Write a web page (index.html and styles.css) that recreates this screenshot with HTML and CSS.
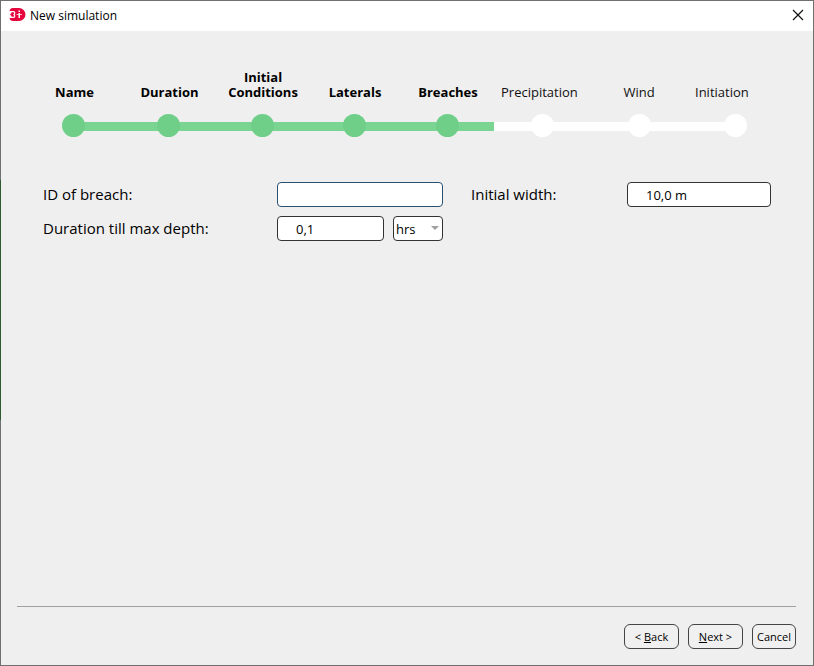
FILE: index.html
```html
<!DOCTYPE html>
<html lang="en">
<head>
<meta charset="utf-8">
<title>New simulation</title>
<link rel="stylesheet" href="styles.css">
</head>
<body>
<div class="window">
  <header class="titlebar">
    <svg class="logo" width="17" height="14" viewBox="0 0 17 14" aria-hidden="true">
      <path fill="#e5063e" d="M4 0h6a6.500 6.500 0 0 1 0 13H4Q1 13 .5 10L2.500 9V8L1 6.500 2.500 5V4L.5 3Q1 0 4 0z"/>
      <path fill="none" stroke="#fff" stroke-width="1.200" d="M1 3.600h3.500q1.300 0 1.300 1.300T4.500 6.500q1.300 .3 1.300 1.600t-1.300 1.300H1"/>
      <path fill="#fff" d="M9.500 5h1.500v5h-1.500zM9.500 2.500h1.500v1.500h-1.500z"/>
      <path fill="none" stroke="#fff" stroke-width="1" opacity=".7" d="M7.500 6.500h5.500"/>
    </svg>
    <h1 class="title">New simulation</h1>
    <button class="close" type="button" aria-label="Close">
      <svg width="12" height="12" viewBox="0 0 12 12"><path d="M1 1l10 10M11 1L1 11" stroke="#111" stroke-width="1.200" fill="none"/></svg>
    </button>
  </header>
  <form class="content">
    <ol class="steps">
      <li class="step done"><span class="name">Name</span><span class="track"></span></li>
      <li class="step done"><span class="name">Duration</span><span class="track"></span></li>
      <li class="step done"><span class="name">Initial<br>Conditions</span><span class="track"></span></li>
      <li class="step done"><span class="name">Laterals</span><span class="track"></span></li>
      <li class="step done" aria-current="step"><span class="name">Breaches</span><span class="track"></span></li>
      <li class="step long"><span class="name">Precipitation</span><span class="track"></span></li>
      <li class="step"><span class="name">Wind</span><span class="track"></span></li>
      <li class="step long"><span class="name">Initiation</span><span class="track"></span></li>
    </ol>
    <div class="fields">
      <label for="breach-id">ID of breach:</label>
      <input class="field focus" id="breach-id" type="text">
      <label class="second" for="width">Initial width:</label>
      <input class="field number" id="width" type="text" value="10,0 m">
      <label for="duration">Duration till max depth:</label>
      <div class="pair">
        <input class="field number" id="duration" type="text" value="0,1">
        <div class="unit">
          <select class="field" aria-label="Duration unit"><option>hrs</option></select>
        </div>
      </div>
    </div>
    <footer class="actions">
      <button class="btn" type="button"><span>&lt; <u>B</u>ack</span></button>
      <button class="btn" type="button"><span><u>N</u>ext &gt;</span></button>
      <button class="btn cancel" type="button">Cancel</button>
    </footer>
  </form>
</div>
</body>
</html>
```
FILE: styles.css
```css
* { box-sizing: border-box; }

body {
  margin: 0;
  font-family: "Open Sans", "Noto Sans", sans-serif;
  color: #000;
}

.window {
  display: flex;
  flex-direction: column;
  min-height: 100vh;
  padding: 1px;
  background: linear-gradient(#707070 27%, #2f5b2e 27%, #2f5b2e 63%, #707070 63%) left / 1px 100% no-repeat #707070;
}

.titlebar {
  display: flex;
  align-items: center;
  gap: 4px;
  height: 30px;
  padding: 0 9px 2px 8px;
  background: #fff;
}

.title {
  flex: 1;
  margin: 0;
  font-size: 12px;
  font-weight: 400;
}

.close {
  display: flex;
  padding: 0;
  border: 0;
  background: none;
}

.content {
  flex: 1;
  display: flex;
  flex-direction: column;
  padding: 39px 17px 16px 16px;
  background: #efefef;
}

.steps {
  display: grid;
  grid-template-columns: 95fr 95fr 92fr 92fr 94fr 96fr 98fr 94fr;
  margin: 0 14px 0 9px;
  padding: 0;
  list-style: none;
}

.step {
  display: flex;
  flex-direction: column;
  justify-content: flex-end;
  gap: 14px;
  font-size: 13px;
  line-height: 15px;
  text-align: center;
  color: #111;
  --bar: #fff;
  --dot: #fff;
}

.step.done {
  font-weight: 700;
  color: #000;
  --bar: #7ad492;
  --dot: #6fcf88;
}

.step.done .name { padding-left: 2px; }

.step.long .name {
  padding-left: 7px;
  text-align: left;
}

.track {
  display: flex;
  justify-content: center;
  height: 23px;
  background: linear-gradient(var(--bar), var(--bar)) right 8px / 100% 9px no-repeat;
}

.step:first-child .track { background-size: 50% 9px; }

.step:last-child .track {
  background-position: left 8px;
  background-size: 50% 9px;
}

.track::before {
  content: "";
  width: 23px;
  border-radius: 50%;
  background: var(--dot);
}

.fields {
  display: grid;
  grid-template-columns: 234fr 166fr 184fr 144fr;
  align-items: center;
  row-gap: 9px;
  margin: 45px 25px 0 26px;
  font-size: 15px;
  line-height: 25px;
}

.second { padding-left: 28px; }

.field {
  width: 100%;
  min-width: 0;
  height: 25px;
  padding: 0 2px;
  border: 1px solid #333;
  border-radius: 4px;
  outline: 0;
  background: #fff;
  color: #000;
  font: 13px "Open Sans", "Noto Sans", sans-serif;
  appearance: none;
}

.focus { border-color: #2b506e; }

.number { padding-left: 18px; }

.pair {
  display: grid;
  grid-template-columns: 107fr 50fr;
  gap: 9px;
}

.unit {
  position: relative;
  display: flex;
}

.unit::after {
  content: "";
  position: absolute;
  top: 10px;
  right: 4px;
  border: 4px solid transparent;
  border-top-color: #a0a0a0;
  border-bottom: 0;
  pointer-events: none;
}

.actions {
  display: flex;
  justify-content: flex-end;
  gap: 9px;
  margin-top: auto;
  padding-top: 17px;
  border-top: 1px solid #a0a0a0;
}

.btn {
  min-width: 55px;
  height: 25px;
  padding: 0 4px;
  border: 1px solid #444;
  border-radius: 6px;
  background: #f0f0f0;
  color: #000;
  font: 11px "Open Sans", "Noto Sans", sans-serif;
}

.btn.cancel { min-width: 44px; }
```
